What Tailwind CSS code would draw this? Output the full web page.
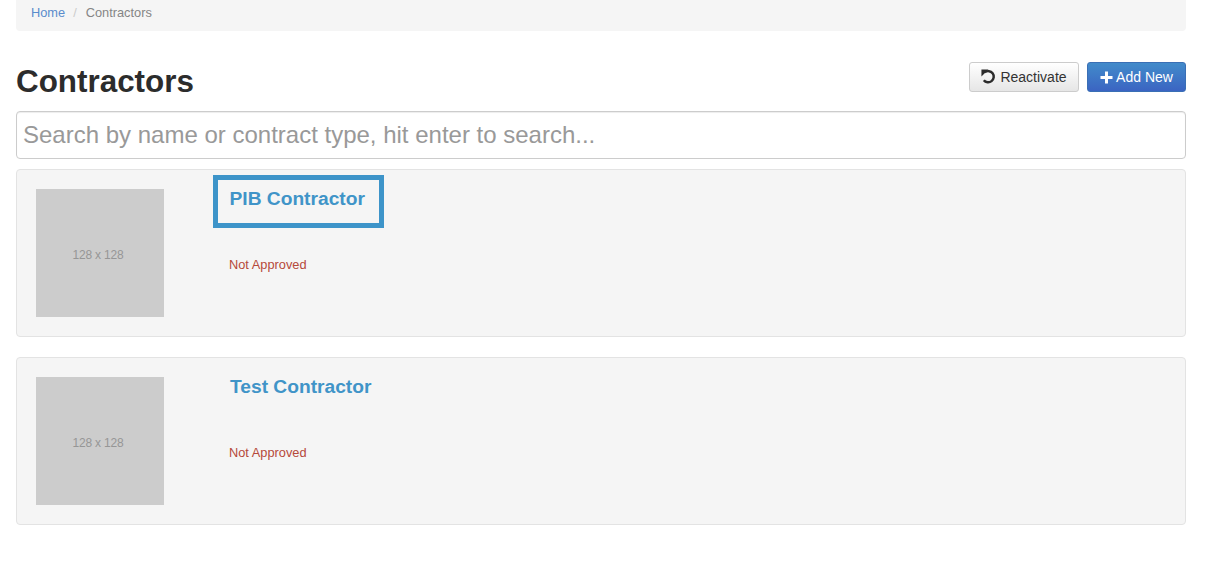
<!DOCTYPE html>
<html>
<head>
<meta charset="utf-8">
<script src="https://cdn.jsdelivr.net/npm/@tailwindcss/browser@4"></script>
</head>
<body class="bg-white font-['Liberation_Sans',Arial,sans-serif] text-[#333] overflow-hidden">
<div class="w-[1225px] h-[565px] px-4 overflow-hidden">
  <div class="w-[1170px]">
    <nav class="h-[31px] bg-[#f5f5f5] rounded-b-[4px] px-[15px] pt-[4px] flex text-[12.8px] leading-[18px]">
      <a class="text-[#5a8ccc]">Home</a>
      <span class="text-[#ccc] px-[8px]">/</span>
      <span class="text-[#858585] ml-[1px]">Contractors</span>
    </nav>
    <div class="flex items-start justify-between h-[80px] pt-[31px]">
      <h1 class="font-bold text-[31.4px] leading-[40px] text-[#2c2c2c]">Contractors</h1>
      <div class="flex gap-2">
        <button class="h-[30px] w-[110px] flex items-center justify-center gap-[4px] rounded-[3px] border border-[#ccc] bg-linear-to-b from-white to-[#e6e6e6] text-[14px] text-[#333]">
          <svg class="w-[15px] h-[15px] -mt-[1px]" viewBox="0 0 14 14" fill="none"><path d="M3.6 3A5.2 5.2 0 1 1 2.6 10.4" stroke="#2c2c2c" stroke-width="2.3"/><path d="M0.4 0.4L7 0.4L0.4 7Z" fill="#2c2c2c"/></svg>
          <span>Reactivate</span>
        </button>
        <button class="h-[30px] w-[99px] flex items-center justify-center gap-[3px] rounded-[3px] border border-[#3a6fb5] bg-linear-to-b from-[#428bca] to-[#3b64c2] text-[14px] text-white">
          <svg class="w-[13px] h-[13px]" viewBox="0 0 13 13"><path d="M5 0.5H8V5H12.5V8H8V12.5H5V8H0.5V5H5Z" fill="#fff"/></svg>
          <span>Add New</span>
        </button>
      </div>
    </div>
    <input placeholder="Search by name or contract type, hit enter to search..." class="block w-full h-[48px] px-[6px] rounded-[4px] border border-[#ccc] bg-white text-[24px] placeholder:text-[#999] outline-none shadow-[inset_0_1px_1px_rgba(0,0,0,0.075)]">
    <section class="mt-[10px] h-[168px] rounded-[4px] border border-[#e3e3e3] bg-[#f5f5f5] p-[19px] flex">
      <div class="w-[128px] h-[128px] shrink-0 bg-[#ccc] flex items-center justify-center text-[12px] tracking-[-0.2px] text-[#969696] pr-[4px] pt-[3px]">128 x 128</div>
      <div class="ml-[49px] -mt-[14px] flex flex-col items-start">
        <div class="w-[171px] h-[53px] border-[5px] border-[#3d94c9] pl-[11.5px] pt-[6px]">
          <a class="font-bold text-[19.2px] leading-[26px] text-[#4094c8]">PIB Contractor</a>
        </div>
        <p class="ml-[16px] mt-[28px] text-[12.8px] leading-[18px] text-[#b5493a]">Not Approved</p>
      </div>
    </section>
    <section class="mt-[20px] h-[168px] rounded-[4px] border border-[#e3e3e3] bg-[#f5f5f5] p-[19px] flex">
      <div class="w-[128px] h-[128px] shrink-0 bg-[#ccc] flex items-center justify-center text-[12px] tracking-[-0.2px] text-[#969696] pr-[4px] pt-[3px]">128 x 128</div>
      <div class="ml-[49px] -mt-[14px] flex flex-col items-start">
        <div class="w-[171px] h-[53px] border-[5px] border-transparent pl-[12px] pt-[6px] whitespace-nowrap">
          <a class="font-bold text-[19.2px] leading-[26px] text-[#4094c8]">Test Contractor</a>
        </div>
        <p class="ml-[16px] mt-[28px] text-[12.8px] leading-[18px] text-[#b5493a]">Not Approved</p>
      </div>
    </section>
  </div>
</div>
</body>
</html>
